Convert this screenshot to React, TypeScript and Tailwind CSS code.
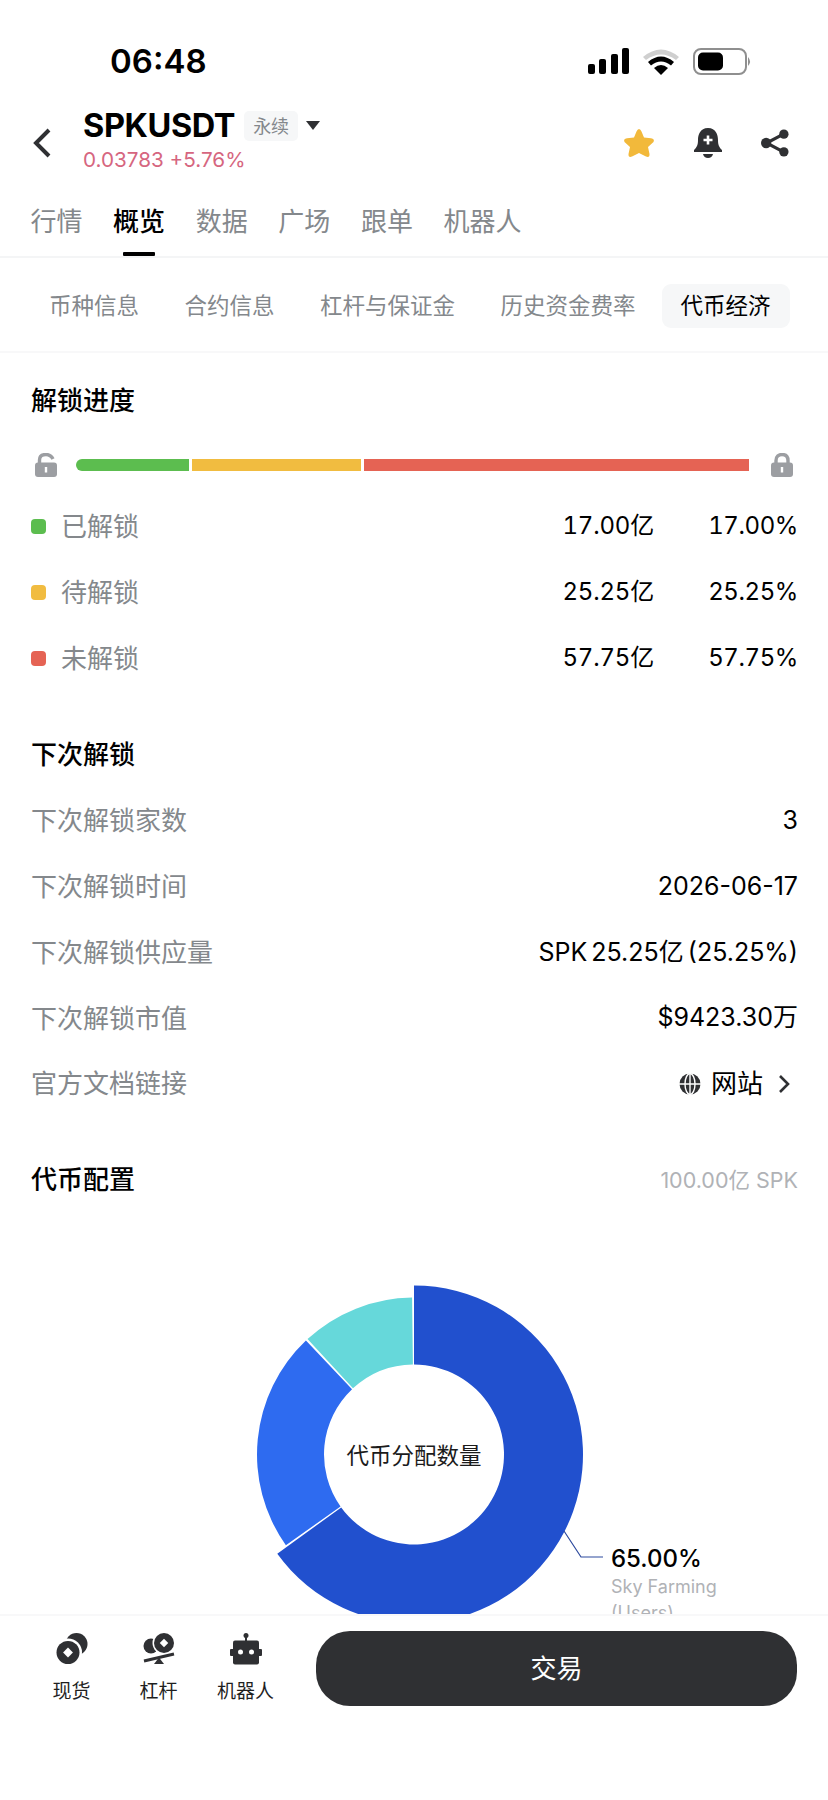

const mainTabs = ['行情', '概览', '数据', '广场', '跟单', '机器人']
const subTabs = ['币种信息', '合约信息', '杠杆与保证金', '历史资金费率']

const unlockRows = [
  { color: 'bg-[#5cbd4f]', label: '已解锁', amount: '17.00亿', pct: '17.00%' },
  { color: 'bg-[#f1bc40]', label: '待解锁', amount: '25.25亿', pct: '25.25%' },
  { color: 'bg-[#e56354]', label: '未解锁', amount: '57.75亿', pct: '57.75%' },
]

const nextRows = [
  { label: '下次解锁家数', value: '3' },
  { label: '下次解锁时间', value: '2026-06-17' },
  { label: '下次解锁供应量', value: 'SPK 25.25亿 (25.25%)' },
  { label: '下次解锁市值', value: '$9423.30万' },
]

function polar(r: number, deg: number) {
  const a = (deg * Math.PI) / 180
  return `${(r * Math.sin(a)).toFixed(2)} ${(-r * Math.cos(a)).toFixed(2)}`
}

function slice(outer: number, inner: number, from: number, to: number) {
  const large = to - from > 180 ? 1 : 0
  return `M${polar(outer, from)} A${outer} ${outer} 0 ${large} 1 ${polar(outer, to)} L${polar(inner, to)} A${inner} ${inner} 0 ${large} 0 ${polar(inner, from)} Z`
}

function StatusBar() {
  return (
    <div className="h-[94px] shrink-0 flex items-end justify-between pl-[110px] pr-[76px] pb-[15px]">
      <span className="text-[33px] leading-[36px] font-semibold text-black">06:48</span>
      <svg width="164" height="28" viewBox="0 0 164 28" className="mb-[3px]">
        <rect x="0" y="16" width="7" height="10" rx="2" fill="#000" />
        <rect x="11" y="11" width="7" height="15" rx="2" fill="#000" />
        <rect x="23" y="6" width="7" height="20" rx="2" fill="#000" />
        <rect x="34" y="0" width="7" height="26" rx="2" fill="#000" />
        <path d="M55 9 Q73 -6 91 9 L88 12 Q73 1 58 12 Z" fill="#cfcfcf" />
        <path d="M60 14 Q73 3 86 14 L83 17.5 Q73 9.5 63 17.5 Z" fill="#000" />
        <path d="M66 20 Q73 14 80 20 L73 27 Z" fill="#000" />
        <rect x="106" y="1" width="52" height="25" rx="7" fill="none" stroke="#8f8f8f" strokeWidth="2" />
        <rect x="110" y="4.5" width="25" height="18" rx="5" fill="#000" />
        <path d="M160 9 Q164 13.5 160 18 Z" fill="#8f8f8f" />
      </svg>
    </div>
  )
}

function Header() {
  return (
    <div className="h-[77px] shrink-0 flex items-start pl-[33px] pr-[39px]">
      <svg width="18" height="30" viewBox="0 0 18 30" className="mt-[34px]">
        <path d="M16 2 L3 15 L16 28" fill="none" stroke="#2f3033" strokeWidth="4" strokeLinejoin="miter" />
      </svg>
      <div className="ml-[32px] pt-[14px] flex flex-col">
        <div className="flex items-center h-[36px]">
          <span className="text-[32.5px] leading-[36px] font-bold text-black tracking-[-0.4px]">SPKUSDT</span>
          <span className="ml-[9px] w-[54px] h-[30px] rounded-[5px] bg-[#f6f7f8] flex items-center justify-center text-[18px] text-[#84888c]">永续</span>
          <svg width="14" height="10" viewBox="0 0 14 10" className="ml-[8px]">
            <path d="M0 0 H14 L7 9 Z" fill="#2f3033" />
          </svg>
        </div>
        <span className="mt-[5px] text-[20.7px] leading-[22px] text-[#d6667f]">0.03783 +5.76%</span>
      </div>
      <div className="ml-auto mt-[34px] flex items-center gap-[39px]">
        <svg width="32" height="30" viewBox="0 0 32 30">
          <path d="M16 1 Q17.5 1 18.5 3.5 L21 9.5 L28 10.2 Q32 10.8 30.5 14 L25 19 L26.5 26 Q26.8 30 23 28.6 L16 25 L9 28.6 Q5.2 30 5.5 26 L7 19 L1.5 14 Q0 10.8 4 10.2 L11 9.5 L13.5 3.5 Q14.5 1 16 1 Z" fill="#f2b93b" />
        </svg>
        <svg width="28" height="30" viewBox="0 0 28 30">
          <path d="M14 0 C6 0 4 7 4 12 C4 17 3 19 0 22 L0 24 L28 24 L28 22 C25 19 24 17 24 12 C24 7 22 0 14 0 Z" fill="#2f3033" />
          <path d="M9 26 H19 Q18 30 14 30 Q10 30 9 26 Z" fill="#2f3033" />
          <path d="M14 7.5 V16.5 M9.5 12 H18.5" stroke="#fff" strokeWidth="2.6" />
        </svg>
        <svg width="28" height="30" viewBox="0 0 30 30">
          <path d="M24 5.5 L6 15 L24 24.5" fill="none" stroke="#2f3033" strokeWidth="3.4" />
          <circle cx="24.5" cy="5.5" r="5" fill="#2f3033" />
          <circle cx="5.5" cy="15" r="5.5" fill="#2f3033" />
          <circle cx="24.5" cy="24.5" r="5" fill="#2f3033" />
        </svg>
      </div>
    </div>
  )
}

function MainTabs() {
  return (
    <div className="h-[87px] shrink-0 flex gap-[30.6px] pl-[30.5px] border-b-2 border-[#f4f5f6]">
      {mainTabs.map((t) => {
        const active = t === '概览'
        return (
          <div key={t} className="relative pt-[33px]">
            <span className={active ? 'text-[26px] leading-[36px] font-medium text-black' : 'text-[26px] leading-[36px] text-[#84888c]'}>{t}</span>
            {active && <div className="absolute bottom-0 left-[10px] right-[10px] h-[4px] bg-black rounded-[1px]" />}
          </div>
        )
      })}
    </div>
  )
}

function SubTabs() {
  return (
    <div className="h-[95px] shrink-0 flex items-start border-b-2 border-[#f8f8f9] pl-[49px] pt-[26px]">
      <div className="flex gap-[45.5px] items-center h-[44px]">
        {subTabs.map((t) => (
          <span key={t} className="text-[22.5px] leading-[30px] text-[#84888c]">{t}</span>
        ))}
      </div>
      <div className="ml-[26px] w-[128px] h-[44px] rounded-[9px] bg-[#f6f7f8] flex items-center justify-center text-[22.5px] text-black">代币经济</div>
    </div>
  )
}

function LockIcon({ open }: { open?: boolean }) {
  return (
    <svg width="22" height="24" viewBox="0 0 22 24">
      {open ? (
        <path d="M4.5 11 V7 C4.5 3 7.5 1.5 11 1.5 C14.5 1.5 16.5 3 18 6" fill="none" stroke="#9c9ea2" strokeWidth="3.4" />
      ) : (
        <path d="M5 11 V7.5 C5 3.5 7.5 1.5 11 1.5 C14.5 1.5 17 3.5 17 7.5 V11" fill="none" stroke="#9c9ea2" strokeWidth="3.4" />
      )}
      <rect x="0" y="9.5" width="22" height="14.5" rx="3" fill="#9c9ea2" />
      <rect x="9.8" y="14" width="2.4" height="5.5" fill="#fff" />
    </svg>
  )
}

function UnlockProgress() {
  return (
    <section className="shrink-0 pl-[31px] pr-[30px]">
      <h2 className="mt-[32px] text-[26px] leading-[32px] font-medium text-black">解锁进度</h2>
      <div className="mt-[34.5px] flex items-center h-[26px]">
        <div className="ml-[4px] flex">
          <LockIcon open />
        </div>
        <div className="ml-[19px] flex gap-[3px] w-[673px] h-[12px]">
          <div className="w-[113px] bg-[#5cbd4f] rounded-l-full" />
          <div className="w-[169px] bg-[#f1bc40]" />
          <div className="flex-1 bg-[#e56354]" />
        </div>
        <div className="ml-auto mr-[5px] flex">
          <LockIcon />
        </div>
      </div>
      <div className="mt-[15.5px]">
        {unlockRows.map((r) => (
          <div key={r.label} className="h-[66px] flex items-center">
            <div className={`w-[15px] h-[15px] rounded-[4px] ${r.color}`} />
            <span className="ml-[15px] text-[26px] text-[#84888c]">{r.label}</span>
            <span className="ml-auto text-[24px] tracking-[-0.2px] text-black tabular-nums">{r.amount}</span>
            <span className="w-[144px] text-right text-[24px] tracking-[-0.4px] text-black tabular-nums">{r.pct}</span>
          </div>
        ))}
      </div>
    </section>
  )
}

function NextUnlock() {
  return (
    <section className="shrink-0 pl-[31px] pr-[30px]">
      <h2 className="mt-[48px] text-[26px] leading-[32px] font-medium text-black">下次解锁</h2>
      <div className="mt-[17px]">
        {nextRows.map((r) => (
          <div key={r.label} className="h-[65.75px] flex items-center justify-between">
            <span className="text-[26px] text-[#84888c]">{r.label}</span>
            <span className="text-[25px] text-black [word-spacing:-3px]">{r.value}</span>
          </div>
        ))}
        <div className="h-[65.75px] flex items-center">
          <span className="text-[26px] text-[#84888c]">官方文档链接</span>
          <svg width="22" height="22" viewBox="0 0 22 22" className="ml-auto">
            <circle cx="11" cy="11" r="10.5" fill="#2f3033" />
            <path d="M11 0 V22 M0 11 H22" stroke="#fff" strokeWidth="1.4" />
            <ellipse cx="11" cy="11" rx="5" ry="10.5" fill="none" stroke="#fff" strokeWidth="1.4" />
          </svg>
          <span className="ml-[10px] text-[26px] text-black">网站</span>
          <svg width="13" height="20" viewBox="0 0 13 20" className="ml-[15px] mr-[7px]">
            <path d="M2 2 L10 10 L2 18" fill="none" stroke="#2f3033" strokeWidth="2.6" />
          </svg>
        </div>
      </div>
    </section>
  )
}

function Allocation() {
  return (
    <section className="shrink-0 pl-[31px] pr-[30px]">
      <div className="mt-[45px] flex items-center justify-between h-[36px]">
        <h2 className="text-[26px] leading-[32px] font-medium text-black">代币配置</h2>
        <span className="text-[21.5px] text-[#b0b2b6]">100.00亿 SPK</span>
      </div>
      <div className="relative h-[520px] -ml-[31px] -mr-[30px]">
        <svg width="828" height="520" viewBox="0 0 828 520" className="absolute left-0 top-0">
          <g transform="translate(414 256.5)">
            <path d={slice(169, 90, 0, 234)} fill="#2150ce" />
            <path d={slice(157, 90, 234.7, 316.5)} fill="#2e6bf0" />
            <path d={slice(157, 90, 317.3, 359.3)} fill="#66d8da" />
          </g>
          <path d="M564 333 L581 359 H603" fill="none" stroke="#2d4a9e" strokeWidth="1.2" />
        </svg>
        <span className="absolute left-[344px] top-[241px] w-[140px] text-center text-[22.5px] leading-[34px] text-[#1b1b1b]">代币分配数量</span>
        <span className="absolute left-[611px] top-[345px] text-[24px] leading-[32px] font-medium text-black">65.00%</span>
        <span className="absolute left-[611px] top-[376px] w-[120px] text-[18px] leading-[26px] text-[#b0b2b6]">Sky Farming (Users)</span>
      </div>
    </section>
  )
}

function FooterItem({ label, children }: { label: string; children: React.ReactNode }) {
  return (
    <div className="w-[87px] flex flex-col items-center">
      <div className="h-[34px] flex items-center justify-center">{children}</div>
      <span className="mt-[13px] text-[19px] leading-[26px] text-[#1f1f1f]">{label}</span>
    </div>
  )
}

function Footer() {
  return (
    <footer className="relative z-10 h-[186px] shrink-0 bg-white border-t-2 border-[#f8f8f9] flex items-start pl-[28px] pr-[31px] pt-[15px]">
      <div className="flex pt-[1px]">
        <FooterItem label="现货">
          <svg width="32" height="32" viewBox="0 0 32 32">
            <circle cx="20.5" cy="11" r="11" fill="#2f3033" />
            <circle cx="12" cy="19.5" r="14" fill="#fff" />
            <circle cx="12" cy="19.5" r="11.5" fill="#2f3033" />
            <rect x="8.5" y="16" width="7" height="7" transform="rotate(45 12 19.5)" fill="#fff" />
          </svg>
        </FooterItem>
        <FooterItem label="杠杆">
          <svg width="32" height="32" viewBox="0 0 32 32">
            <circle cx="8" cy="13" r="7.5" fill="#2f3033" />
            <circle cx="21" cy="10" r="11.5" fill="#fff" />
            <circle cx="21" cy="10" r="10" fill="#2f3033" />
            <rect x="18" y="7" width="6" height="6" transform="rotate(45 21 10)" fill="#fff" />
            <path d="M1 28 L31 21" stroke="#2f3033" strokeWidth="3" />
            <path d="M16 24.5 L21 31 H11 Z" fill="#2f3033" />
          </svg>
        </FooterItem>
        <FooterItem label="机器人">
          <svg width="32" height="32" viewBox="0 0 32 32">
            <circle cx="16" cy="2.5" r="2.5" fill="#2f3033" />
            <rect x="15" y="3" width="2" height="6" fill="#2f3033" />
            <rect x="3" y="7.5" width="26" height="24" rx="2" fill="#2f3033" />
            <rect x="0" y="16" width="32" height="7" rx="1" fill="#2f3033" />
            <circle cx="10.5" cy="19" r="2.5" fill="#fff" />
            <circle cx="21.5" cy="19" r="2.5" fill="#fff" />
          </svg>
        </FooterItem>
      </div>
      <button className="ml-auto w-[481px] h-[75px] rounded-[34px] bg-[#2f3033] text-white text-[26px]">交易</button>
    </footer>
  )
}

export default function App() {
  return (
    <div className='w-[828px] h-[1800px] bg-white flex flex-col overflow-hidden font-["Inter","Noto_Sans_CJK_SC",sans-serif]'>
      <main className="flex-1 min-h-0 overflow-hidden flex flex-col">
        <StatusBar />
        <Header />
        <MainTabs />
        <SubTabs />
        <UnlockProgress />
        <NextUnlock />
        <Allocation />
      </main>
      <Footer />
    </div>
  )
}
